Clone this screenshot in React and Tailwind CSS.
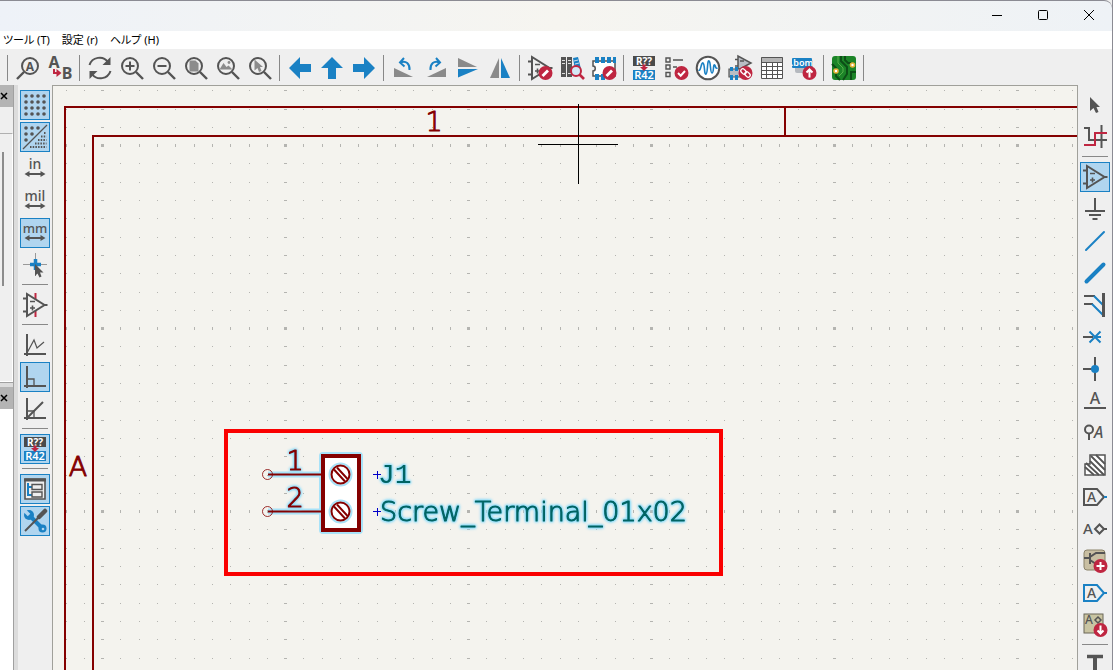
import React, { useState } from 'react';

const GRAY = '#545454';
const BLUE = '#1a81c4';
const RED = '#bf2641';
const SHEET = '#840000';
const FIELD = '#006464';
const HALO = '#a8e2f8';
const STROKE_FONT = "'DejaVu Sans Light', 'DejaVu Sans', sans-serif";

function Icon({ children }) {
  return (
    <svg
      width="26"
      height="26"
      viewBox="0 0 26 26"
      fill="none"
      stroke={GRAY}
      strokeWidth="2"
      className="block shrink-0 overflow-visible"
      aria-hidden="true"
    >
      {children}
    </svg>
  );
}

function Label({ x, y, size, fill = GRAY, weight = 500, children }) {
  return (
    <text
      x={x}
      y={y}
      fontSize={size}
      fill={fill}
      stroke="none"
      textAnchor="middle"
      fontWeight={weight}
      fontFamily="'Noto Sans', sans-serif"
    >
      {children}
    </text>
  );
}

function Lens({ children }) {
  return (
    <Icon>
      <circle cx="11" cy="11" r="8" />
      <path d="M17 17L24 24" strokeWidth="2.4" />
      {children}
    </Icon>
  );
}

function Badge({ children }) {
  return (
    <g>
      <circle cx="18.5" cy="18" r="7" fill={RED} stroke="none" />
      <g stroke="#fff">{children}</g>
    </g>
  );
}

const pencil = <path d="M15.5 21L21 15.5" strokeWidth="2.8" />;

const OpAmp = ({ pins = '' }) => (
  <g>
    {pins && <path d="M13.5 1V25" stroke={RED} />}
    <path d="M5 2V24L22.5 13Z" fill="#efefef" fillOpacity={pins ? 1 : 0} />
    <path d="M1 6.5H5M1 19.5H5M22 13H25.5" />
    <path d="M8 9.5H13M8 16H13M10.5 13.5V18.5" strokeWidth="1.6" />
  </g>
);

const Annotate = () => (
  <Icon>
    <rect x="2" y="1" width="22" height="10" fill="#4a4a4a" stroke="none" />
    <rect x="2" y="15" width="22" height="10" fill={BLUE} stroke="none" />
    <Label x="13" y="9.5" size="10" fill="#fff" weight={700}>R??</Label>
    <Label x="13" y="24" size="11" fill="#fff" weight={600}>R42</Label>
    <path d="M11.5 9.5H14.5V12H17L13 16L9 12H11.5Z" fill={RED} stroke="none" />
  </Icon>
);

const arrowPath = 'M2 13L13 2V9H24V17H13V24Z';

const topTools = [
  null,
  ['Find', <Icon>
    <circle cx="15" cy="11" r="8" />
    <path d="M9 17L2 24" strokeWidth="2.4" />
    <Label x="15" y="15.5" size="12" weight={700}>A</Label>
  </Icon>],
  ['Find and replace', <Icon>
    <Label x="7" y="13" size="16" weight={700}>A</Label>
    <Label x="20" y="24" size="16" weight={700}>B</Label>
    <path d="M7 14V18H11" stroke={RED} />
    <path d="M9.5 14L14.5 18L9.5 22Z" fill={RED} stroke="none" />
  </Icon>],
  null,
  ['Refresh', <Icon>
    <path d="M2.5 10C5 2 16 0 21 7" />
    <path d="M23.5 2V10H15.5Z" fill={GRAY} stroke="none" />
    <path d="M23.5 16C21 24 10 26 5 19" />
    <path d="M2.5 24V16H10.5Z" fill={GRAY} stroke="none" />
  </Icon>],
  ['Zoom in', <Lens><path d="M6.5 11H15.5M11 6.5V15.5" /></Lens>],
  ['Zoom out', <Lens><path d="M6.5 11H15.5" /></Lens>],
  ['Zoom to page', <Lens><path d="M6.5 5.5H12.5L15.5 8.5V16.5H6.5Z" fill="#8c8c8c" stroke="none" /></Lens>],
  ['Zoom to objects', <Lens>
    <path d="M4.5 14.5L8.5 8L11.5 12L13.5 10.5L17.5 14.5Z" fill="#8c8c8c" stroke="none" />
    <circle cx="14" cy="7.5" r="1.4" fill="#8c8c8c" stroke="none" />
  </Lens>],
  ['Zoom to selection', <Lens>
    <path d="M7.5 4.5V15.5L10.5 13L12 17L14.5 16L13 12H16Z" fill="#8c8c8c" stroke="none" />
  </Lens>],
  null,
  ['Back', <Icon><path d={arrowPath} fill={BLUE} stroke="none" /></Icon>],
  ['Up', <Icon><path d={arrowPath} fill={BLUE} stroke="none" transform="rotate(90 13 13)" /></Icon>],
  ['Forward', <Icon><path d={arrowPath} fill={BLUE} stroke="none" transform="rotate(180 13 13)" /></Icon>],
  null,
  ['Rotate left', <Icon>
    <path d="M3 13V22H22Z" fill="#8a8a8a" stroke="none" />
    <path d="M9.5 7.5C15 5 19 9 18.5 15M13 3L9 7.5L13.5 11.5" stroke={BLUE} />
  </Icon>],
  ['Rotate right', <Icon>
    <path d="M23 13V22H4Z" fill="#8a8a8a" stroke="none" />
    <path d="M16.5 7.5C11 5 7 9 7.5 15M13 3L17 7.5L12.5 11.5" stroke={BLUE} />
  </Icon>],
  ['Flip vertically', <Icon>
    <path d="M3 3V12H22Z" fill="#8a8a8a" stroke="none" />
    <path d="M3 14H23L3 22.5Z" fill={BLUE} stroke="none" />
  </Icon>],
  ['Flip horizontally', <Icon>
    <path d="M12 3V23H3Z" fill="#8a8a8a" stroke="none" />
    <path d="M14 3V23H23Z" fill={BLUE} stroke="none" />
  </Icon>],
  null,
  ['Symbol editor', <Icon><OpAmp /><Badge>{pencil}</Badge></Icon>],
  ['Symbol library browser', <Icon>
    <path d="M2 2H7V22H2ZM8 2H13V22H8Z" fill={GRAY} stroke="none" />
    <path d="M3 5.5H6M3 8.5H6M3 18.5H6M9 5.5H12M9 8.5H12M9 18.5H12" stroke="#ddd" strokeWidth="1" />
    <path d="M14 3L19 2L22 14L16 15Z" fill={BLUE} stroke="none" />
    <path d="M15 6L19 5M16 9L20 8" stroke="#cde" strokeWidth="1" />
    <circle cx="17" cy="16" r="5" stroke={RED} fill="#d5e8f5" />
    <path d="M20.5 19.5L25 24" stroke={RED} strokeWidth="2.6" />
  </Icon>],
  ['Footprint editor', <Icon>
    <path d="M2 6H24V21H2V16C5 16 5 11 2 11Z" fill="#fff" strokeWidth="1.5" />
    <path d="M4 2H8V8H4ZM10 2H14V8H10ZM16 2H20V8H16ZM22 2H25V8H22ZM4 19H8V25H4ZM10 19H14V25H10Z" fill={BLUE} stroke="none" />
    <Badge>{pencil}</Badge>
  </Icon>],
  null,
  ['Annotate', <Annotate />],
  ['Electrical rules check', <Icon>
    <path d="M3 3H7V7H3ZM3 10H7V14H3ZM3 17.5H7V21.5H3Z" strokeWidth="1.4" />
    <path d="M10 5H20M10 12H14" strokeWidth="1.4" />
    <Badge><path d="M15 18L17.7 20.7L22 16" /></Badge>
  </Icon>],
  ['Simulator', <Icon>
    <circle cx="13" cy="13" r="11.3" fill="#fff" />
    <path d="M3.5 15C6 17 6 7 8 8S9 20 11 19S12 5 14 6S15 18 17 18S18 9 19.5 10S20 14 22.5 13" stroke={BLUE} strokeWidth="1.6" />
  </Icon>],
  ['Assign footprints', <Icon>
    <path d="M11 1V15L24 8Z" fill="#b9bdc4" strokeWidth="1.5" />
    <path d="M8 4.5H11M8 11H11M13 6H17" strokeWidth="1.4" />
    <path d="M2 14H17V22H2Z" fill="#b9bdc4" strokeWidth="1.2" />
    <path d="M3 12H6V16H3ZM8 12H11V16H8ZM3 20H6V25H3ZM8 20H11V25H8Z" fill={BLUE} stroke="none" />
    <Badge>
      <rect x="13.5" y="14.5" width="6" height="4" rx="2" strokeWidth="1.3" transform="rotate(45 16.5 16.5)" />
      <rect x="17.500" y="17.500" width="6" height="4" rx="2" strokeWidth="1.3" transform="rotate(45 20.5 19.5)" />
    </Badge>
  </Icon>],
  ['Symbol fields table', <Icon>
    <path d="M2 2H24V7H2Z" fill="#b5b5b5" stroke="none" />
    <path d="M2 7H24V24H2Z" fill="#fff" stroke="none" />
    <path d="M2.5 2.5H23.5V23.5H2.5ZM2.5 7.5H23.5M2.5 11.5H23.5M2.5 15.5H23.5M2.5 19.5H23.5M7.5 7V24M13.5 7V24M18.5 7V24" strokeWidth="1" />
  </Icon>],
  ['Bill of materials', <Icon>
    <rect x="4" y="5" width="18" height="13" rx="2" fill="#b5b9bf" stroke="none" />
    <rect x="1" y="3" width="20" height="10" rx="1" fill={BLUE} stroke="none" />
    <Label x="11" y="11" size="9" fill="#fff" weight={600}>.bom</Label>
    <Badge><path d="M18.5 22.5V15.500M15.5 17.5L18.5 14.5L21.5 17.5" /></Badge>
  </Icon>],
  null,
  ['Open PCB editor', <Icon>
    <rect x="1" y="1" width="24" height="24" rx="3" fill="#1c8428" stroke="none" />
    <path d="M10 1V6L16 12V19L12 25M14 1V5L17 8H20M1 9L5 13V15M5 18V21L9 25M25 17H20V25" stroke="#0d4f17" strokeWidth="2" />
    <path d="M7 1V8L12 13V17L8 21" stroke="#58b04a" strokeWidth="1" />
    <circle cx="5" cy="16" r="2" fill="#fff" stroke="#e8b33a" strokeWidth="1.6" />
    <circle cx="21.5" cy="10" r="2" fill="#fff" stroke="#e8b33a" strokeWidth="1.6" />
  </Icon>],
  null,
];

const unitArrow = (
  <g>
    <path d="M6 18H20" />
    <path d="M7.5 15L2.5 18L7.500 21ZM18.5 15L23.5 18L18.5 21Z" fill={GRAY} stroke="none" />
  </g>
);

const dots = (points, r) =>
  points.map(([x, y]) => <circle key={`${x}-${y}`} cx={x} cy={y} r={r} fill={GRAY} stroke="none" />);

const gridDots = [4, 10, 16, 22].flatMap((y) => [4, 10, 16, 22].map((x) => [x, y]));

const leftTools = [
  ['Show grid', <Icon>{dots(gridDots, 1.8)}</Icon>, true],
  ['Grid overrides', <Icon>
    {dots([[4, 4], [10, 4], [16, 4], [4, 10], [10, 10], [4, 16]], 1.8)}
    <path d="M1 25L25 1" strokeWidth="1.2" />
    <path d="M22 9H24.5M19 12.5H24.5M16 16H24.5M13 19.5H24.5M8 23H24.5" strokeDasharray="1.5 1.2" />
  </Icon>, true],
  ['Inches', <Icon><Label x="13" y="13" size="14">in</Label>{unitArrow}</Icon>],
  ['Mils', <Icon><Label x="13" y="13" size="14">mil</Label>{unitArrow}</Icon>],
  ['Millimeters', <Icon><Label x="13" y="13" size="13">mm</Label>{unitArrow}</Icon>, true],
  ['Full-window crosshairs', <Icon>
    <path d="M1 12.5H25M13.5 1V24" stroke="#999" strokeWidth="1" />
    <path d="M8 12.5H19M13.5 7V18" stroke={BLUE} strokeWidth="3.5" />
    <path d="M13 12V24L15.5 21.5L17.5 25.5L19.5 24.5L18 20.5H21.5Z" fill={GRAY} stroke="none" />
  </Icon>],
  null,
  ['Show hidden pins', <Icon><OpAmp pins="hidden" /></Icon>],
  null,
  ['Free angle', <Icon><path d="M5 2V24M2 22H24" /><path d="M5 21L12 8L15 16L22 10" strokeWidth="1.2" /></Icon>],
  ['Right angle', <Icon><path d="M5 2V24M2 22H24" /><path d="M5 15H12V22" strokeWidth="1.3" /></Icon>, true],
  ['45 degree angle', <Icon><path d="M5 2V24M2 22H24M5 22L21 6" /><path d="M5 15H12V22" strokeWidth="1.3" /></Icon>],
  null,
  ['Annotate automatically', <Annotate />, true],
  null,
  ['Hierarchy navigator', <Icon>
    <path d="M3 3H23V23H3Z" fill="#eee" strokeWidth="1.6" />
    <path d="M2 4H24" strokeWidth="3" />
    <path d="M6 7V19H10M6 11H10" stroke={BLUE} />
    <path d="M10 8.5H20V13.5H10ZM10 16H20V21H10Z" strokeWidth="1.4" />
  </Icon>, true],
  ['Properties manager', <Icon>
    <circle cx="7" cy="7" r="5" fill={BLUE} stroke="none" />
    <path d="M7 7L1 1" stroke="#b0d5ef" strokeWidth="3.5" />
    <path d="M9 9L20 20" stroke={BLUE} strokeWidth="4" />
    <circle cx="20.5" cy="20.5" r="4" fill={BLUE} stroke="none" />
    <circle cx="21" cy="21" r="1.3" fill="#b0d5ef" stroke="none" />
    <path d="M23 3L17 9" strokeWidth="4.5" strokeLinecap="round" />
    <path d="M17 9L3 23" strokeWidth="2" />
  </Icon>, true],
];

const rightTools = [
  ['Select', <Icon><path d="M8 5V19L11.5 16L14 21L16.5 20L14.5 15H18Z" fill={GRAY} stroke="none" /></Icon>],
  ['Highlight net', <Icon>
    <path d="M2 4H7V16H13M14 16H25M19.5 1V24" />
    <path d="M2 21H13V9H25" stroke={RED} />
  </Icon>],
  null,
  ['Place symbol', <Icon><OpAmp /></Icon>, true],
  ['Place power', <Icon><path d="M13 2V15M3 15H23M7 19H19M10.5 23H15.5" /></Icon>],
  ['Draw wire', <Icon><path d="M4 22L22 4" stroke={BLUE} strokeLinecap="round" /></Icon>],
  ['Draw bus', <Icon><path d="M4.5 21.5L21.5 4.5" stroke={BLUE} strokeWidth="4" strokeLinecap="round" /></Icon>],
  ['Bus entry', <Icon>
    <path d="M2 4H13M2 12H11" />
    <path d="M12 4L21 13M10 12L21 23" stroke={BLUE} />
    <path d="M21.5 1V25" strokeWidth="3" />
  </Icon>],
  ['No connect', <Icon>
    <path d="M1 13H11" />
    <path d="M7.5 7.5L18.5 18.5M18.5 7.5L7.5 18.5M13 13H19" stroke={BLUE} />
  </Icon>],
  ['Junction', <Icon><path d="M1 13H13M13 1V25" /><circle cx="13" cy="13" r="4" fill={BLUE} stroke="none" /></Icon>],
  ['Net label', <Icon><Label x="13" y="16" size="16">A</Label><path d="M2 20H24" /></Icon>],
  ['Net class directive', <Icon>
    <circle cx="7" cy="9.5" r="4" />
    <path d="M7 14V20" />
    <text x="12" y="18" fontSize="16" fill={GRAY} stroke="none" fontStyle="italic" fontWeight="500" fontFamily="'Noto Sans', sans-serif">A</text>
  </Icon>],
  ['Rule area', <Icon>
    <path d="M8 3H23V23H3V12H8Z" fill="#fff" strokeWidth="1.5" />
    <path d="M14 3L23 12M9 4L23 18M8 9L22 23M4 11L17 23M3 15L12 23" strokeWidth="1.8" />
  </Icon>],
  ['Global label', <Icon>
    <path d="M2 5H15L22 13L15 21H2Z" />
    <path d="M22 13H25" stroke={BLUE} />
    <Label x="9.5" y="18" size="14">A</Label>
  </Icon>],
  ['Hierarchical label', <Icon>
    <Label x="6" y="18" size="15">A</Label>
    <path d="M17.5 8.5L22 13L17.5 17.5L13 13ZM22 13H25" />
  </Icon>],
  ['Draw hierarchical sheet', <Icon>
    <rect x="2" y="2" width="21" height="20" rx="3" fill="#c9bfa2" stroke="#8a8269" strokeWidth="1" />
    <path d="M2 10H8M8 5V16M8 9L14 5H23M8 12L14 16" />
    <Badge><path d="M18.5 14V22M14.5 18H22.5" /></Badge>
  </Icon>],
  ['Sheet pin', <Icon>
    <path d="M2 5H15L22 13L15 21H2ZM22 13H25" stroke={BLUE} />
    <Label x="9.5" y="18" size="14">A</Label>
  </Icon>],
  ['Import sheet pins', <Icon>
    <rect x="2" y="2" width="19" height="19" fill="#c9c4a2" stroke="#6a6757" strokeWidth="1" />
    <Label x="7" y="12" size="12">A</Label>
    <path d="M16 5L19 8L16 11L13 8Z" strokeWidth="1.5" />
    <Badge><path d="M18.5 13.5V21M15.5 18.5L18.5 21.5L21.5 18.5" /></Badge>
  </Icon>],
  null,
  ['Add text', <Icon><path d="M5 4.5H21" strokeWidth="3.5" /><path d="M13 4V24" strokeWidth="4" /></Icon>],
];

function SideBar({ label, tools }) {
  const [active, setActive] = useState(() => tools.map((tool) => Boolean(tool && tool[2])));

  const toggle = (index) => {
    setActive(active.map((on, i) => (i === index ? !on : on)));
  };

  return (
    <div role="toolbar" aria-label={label} className="flex flex-col items-center pt-1">
      {tools.map((tool, i) =>
        tool ? (
          <button
            key={i}
            type="button"
            aria-label={tool[0]}
            aria-pressed={active[i]}
            onClick={() => toggle(i)}
            className={`my-px flex size-[30px] shrink-0 items-center justify-center border ${
              active[i] ? 'border-[#1a81c4] bg-[#b0d5ef]' : 'border-transparent'
            }`}
          >
            {tool[1]}
          </button>
        ) : (
          <div key={i} className="flex h-2 w-[26px] shrink-0 items-start pt-[3px]">
            <div className="h-px w-full bg-[#888888]" />
          </div>
        )
      )}
    </div>
  );
}

function PanelHeader() {
  return (
    <div className="flex h-[22px] shrink-0 items-center bg-[#b4b4b4]">
      <button type="button" aria-label="Close panel" className="flex size-2">
        <svg width="8" height="8" viewBox="0 0 8 8" stroke="#000" strokeWidth="1.5">
          <path d="M1 1L7 7M7 1L1 7" />
        </svg>
      </button>
    </div>
  );
}

function SidePanels() {
  return (
    <div className="flex w-[18px] shrink-0 border-r-4 border-[#dcdcdc]">
      <div className="flex w-full flex-col border-r border-[#a0a0a0]">
        <PanelHeader />
        <div className="h-[26px] shrink-0" />
        <div className="h-[249px] shrink-0 border-y border-r border-t-[#b0b0b0] border-r-white border-b-white pt-[18px] pl-0.5">
          <div className="h-[134px] w-0.5 bg-[#8c8c8c]" />
        </div>
        <div className="h-[5px] shrink-0 border-t border-[#a0a0a0] bg-[#dcdcdc]" />
        <PanelHeader />
        <div className="flex-1 bg-white" />
      </div>
    </div>
  );
}

// Every tenth row and column of the grid has heavier dots
const GRID_STEPS = [0, 18, 37, 55, 73, 92, 110, 128, 147, 165];

function Grid() {
  return (
    <>
      <defs>
        <pattern id="grid" x="48" y="58" width="183" height="183" patternUnits="userSpaceOnUse">
          <g fill="#b4b4b0" shapeRendering="crispEdges">
            {GRID_STEPS.map((x) =>
              GRID_STEPS.map((y) => (
                <rect
                  key={`${x}-${y}`}
                  x={x === 0 ? 0 : x + 1}
                  y={y === 0 ? 0 : y + 1}
                  width={x === 0 ? 3 : 1}
                  height={y === 0 ? 3 : 1}
                />
              ))
            )}
          </g>
        </pattern>
      </defs>
      <rect width="100%" height="100%" fill="url(#grid)" />
    </>
  );
}

// Light text thickened to pen width, with the selection glow behind it
function PenText({ x, y, size = 27, color, glow, anchor = 'start', pen = 1, font = STROKE_FONT, children }) {
  const shared = { x, y, fontSize: size, fontFamily: font, fontWeight: 200, textAnchor: anchor };
  return (
    <text
      {...shared}
      fill={color}
      stroke={color}
      strokeWidth={pen}
      strokeLinejoin="round"
      className={
        glow
          ? '[filter:drop-shadow(0_0_1px_#8cdcfa)_drop-shadow(0_0_1px_#8cdcfa)_drop-shadow(0_0_1px_#a8e2f8)]'
          : undefined
      }
    >
      {children}
    </text>
  );
}

function Terminal() {
  const screws = [388.5, 425.5];

  return (
    <g fill="none">
      <g stroke={HALO} strokeWidth="8" strokeLinejoin="round">
        <rect x="270" y="370" width="36" height="74" />
        {screws.map((y) => (
          <path key={y} d={`M215 ${y}H268`} strokeWidth="6" />
        ))}
      </g>
      <rect x="270" y="370" width="36" height="74" fill="#fff" stroke={SHEET} strokeWidth="4" />
      {screws.map((y) => (
        <g key={y} stroke={SHEET} strokeWidth="2">
          <path d={`M215 ${y}H268`} />
          <circle cx="214.5" cy={y} r="5" strokeWidth="1" strokeOpacity="0.8" />
          <circle cx="287.5" cy={y} r="11" stroke={HALO} />
          <circle cx="287.5" cy={y} r="9" />
          <path d={`M281 ${y - 5}L292 ${y + 7}M284 ${y - 7}L295 ${y + 5}`} />
        </g>
      ))}
      <PenText x={242} y={384} color={SHEET} anchor="middle" glow>1</PenText>
      <PenText x={242} y={421} color={SHEET} anchor="middle" glow>2</PenText>
    </g>
  );
}

function Canvas() {
  return (
    <main className="min-w-0 flex-1 overflow-hidden border-x border-t border-[#a0a09a] bg-[#f4f3ee]">
      <svg width="100%" height="100%" className="block" role="img" aria-label="Schematic">
        <Grid />
        <g stroke={SHEET} strokeWidth="2" fill="none">
          <path d="M2000 21H12V2000M2000 50H40V2000M732 21V50" />
        </g>
        <PenText x={381} y={45} color={SHEET} anchor="middle">1</PenText>
        <PenText x={25} y={390} color={SHEET} anchor="middle">A</PenText>
        <Terminal />
        <PenText x={325} y={397} size={28} color={FIELD} pen={0} font="'Liberation Mono', monospace" glow>J1</PenText>
        <PenText x={327} y={435} color={FIELD} glow>Screw_Terminal_01x02</PenText>
        <path d="M320 388.5H328M324.5 385V393M320 425.5H328M324.5 422V430" stroke="#0000c8" strokeWidth="1" />
        <rect x="173" y="345" width="495" height="143" fill="none" stroke="#fa0000" strokeWidth="4" />
        <path d="M485 58.5H565M525.5 18V98" stroke="#000" strokeWidth="1" />
      </svg>
    </main>
  );
}

function TitleBar() {
  return (
    <header className="flex h-[31px] shrink-0 justify-end rounded-tr-lg border-t border-[#8b8b93] bg-linear-to-r from-[#eef2f8] via-[#f6f5f0] to-[#eef2f6] pb-0.5">
      <button type="button" aria-label="Minimize" className="flex w-[46px] items-center justify-center">
        <svg width="12" height="12" stroke="#000"><path d="M1 6.5H11" /></svg>
      </button>
      <button type="button" aria-label="Maximize" className="flex w-[46px] items-center justify-center">
        <svg width="12" height="12" stroke="#000" fill="none"><rect x="1.5" y="1.5" width="9" height="9" rx="1" /></svg>
      </button>
      <button type="button" aria-label="Close" className="flex w-[46px] items-center justify-center">
        <svg width="12" height="12" stroke="#000"><path d="M1 1L11 11M11 1L1 11" /></svg>
      </button>
    </header>
  );
}

export default function App() {
  return (
    <div className="flex h-screen flex-col overflow-hidden border-r border-[#8b8b93] bg-[#efefef] font-['Noto_Sans','Noto_Sans_CJK_JP',sans-serif]">
      <TitleBar />
      <nav className="flex h-[18px] shrink-0 items-center gap-3 bg-white pl-[3px] text-[11px] leading-[18px] whitespace-nowrap text-black [font-feature-settings:'palt']">
        <button type="button">ツール (T)</button>
        <button type="button">設定 (r)</button>
        <button type="button">ヘルプ (H)</button>
      </nav>

      {/* Main toolbar */}
      <div role="toolbar" aria-label="Main" className="flex h-9 shrink-0 items-center pt-0.5 pl-1">
        {topTools.map((tool, i) =>
          tool ? (
            <button key={i} type="button" aria-label={tool[0]} className="flex size-8 shrink-0 items-center justify-center">
              {tool[1]}
            </button>
          ) : (
            <div key={i} className="flex w-2 shrink-0 pl-[3px]">
              <div className="h-[26px] w-px bg-[#888888]" />
            </div>
          )
        )}
      </div>

      <div className="flex min-h-0 flex-1">
        <SidePanels />
        <div className="w-[34px] shrink-0">
          <SideBar label="Display options" tools={leftTools} />
        </div>
        <Canvas />
        <div className="w-[34px] shrink-0">
          <SideBar label="Drawing tools" tools={rightTools} />
        </div>
      </div>
    </div>
  );
}
